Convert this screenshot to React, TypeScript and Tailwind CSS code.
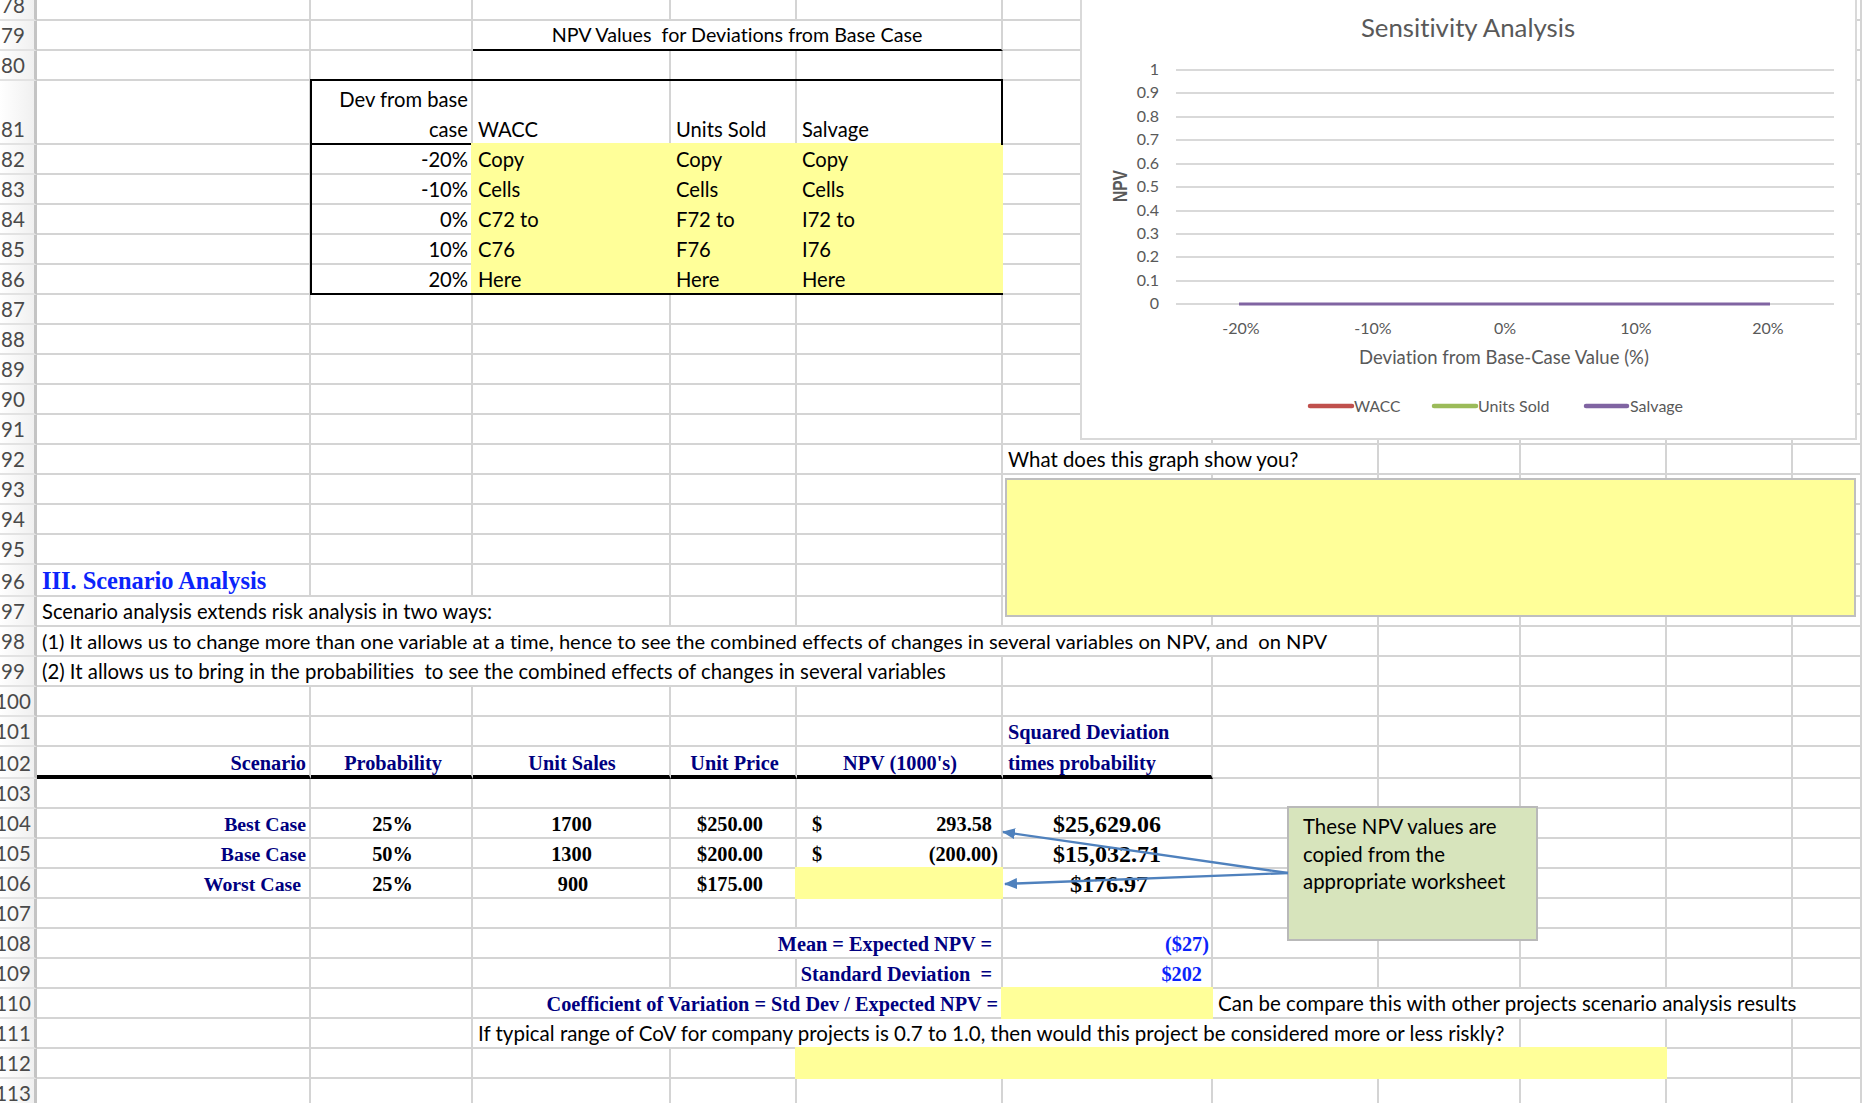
import React from "react";

const BASE = "font-['Lato','Carlito',sans-serif] [font-variant-ligatures:none] leading-[26px] pb-[1px] text-black";
const CAL = `${BASE} text-[20.2px]`;
const SERIF = "font-['Liberation_Serif',serif] font-bold";
const NAVY = `${SERIF} text-[20.3px] leading-[25px] text-[#000080]`;
const NAME = `${SERIF} text-[19.8px] leading-[25px] text-[#000080]`;
const HEAD = `${SERIF} text-[20.3px] leading-[24px] text-[#000080] border-b-[4px] border-b-black`;
const BLK = `${SERIF} text-[20.3px] leading-[25px] text-black`;
const BIG = `${SERIF} text-[24px] leading-[26px] text-black`;
const BLUE = `${SERIF} text-[20.3px] leading-[25px] text-[#0b24fb]`;

type C = { s?: number; t?: React.ReactNode; c?: string; y?: boolean };

const span: Record<number, string> = {
  1: "col-span-1", 2: "col-span-2", 3: "col-span-3", 4: "col-span-4", 5: "col-span-5", 6: "col-span-6", 7: "col-span-7",
};

const rows: { n: number; h: string; cells: C[] }[] = [
  { n: 78, h: "h-[30px]", cells: [] },
  { n: 79, h: "h-[30px]", cells: [{}, {}, { s: 3, t: "NPV Values  for Deviations from Base Case", c: `${BASE} text-[19.7px] justify-center border-b-black` }] },
  { n: 80, h: "h-[30px]", cells: [] },
  { n: 81, h: "h-[64px]", cells: [
    {},
    { t: <span className="-mb-[2px] block text-right leading-[30px]">Dev from base<br />case</span>, c: `${CAL} justify-end pr-[3px] border-b-black` },
    { t: "WACC", c: `${CAL} pl-[5px] border-b-black` },
    { t: "Units Sold", c: `${CAL} pl-[5px] border-b-black` },
    { t: "Salvage", c: `${CAL} pl-[5px] border-b-black border-r-black` },
  ] },
  ...[["-20%", "Copy", "Copy", "Copy"], ["-10%", "Cells", "Cells", "Cells"], ["0%", "C72 to", "F72 to", "I72 to"], ["10%", "C76", "F76", "I76"], ["20%", "Here", "Here", "Here"]].map((r, i) => ({
    n: 82 + i,
    h: "h-[30px]",
    cells: [
      {},
      { t: r[0], c: `${CAL} justify-end pr-[3px] ${i === 4 ? "border-b-black" : ""}` },
      { t: r[1], c: `${CAL} pl-[5px]`, y: true },
      { t: r[2], c: `${CAL} pl-[5px]`, y: true },
      { t: r[3], c: `${CAL} pl-[5px]`, y: true },
    ] as C[],
  })),
  ...[87, 88, 89, 90, 91].map((n) => ({ n, h: "h-[30px]", cells: [] as C[] })),
  { n: 92, h: "h-[30px]", cells: [{}, {}, {}, {}, {}, { s: 2, t: "What does this graph show you?", c: `${BASE} text-[20.4px] pl-[5px]` }] },
  { n: 93, h: "h-[30px]", cells: [] },
  { n: 94, h: "h-[30px]", cells: [] },
  { n: 95, h: "h-[30px]", cells: [] },
  { n: 96, h: "h-[32px]", cells: [{ t: "III. Scenario Analysis", c: `${SERIF} text-[24.4px] leading-[26px] pb-[1px] text-[#0b24fb] pl-[5px]` }] },
  { n: 97, h: "h-[30px]", cells: [{ s: 3, t: "Scenario analysis extends risk analysis in two ways:", c: `${CAL} pl-[5px]` }] },
  { n: 98, h: "h-[30px]", cells: [{ s: 7, t: "(1) It allows us to change more than one variable at a time, hence to see the combined effects of changes in several variables on NPV, and  on NPV", c: `${BASE} text-[20.15px] pl-[5px]` }] },
  { n: 99, h: "h-[30px]", cells: [{ s: 5, t: "(2) It allows us to bring in the probabilities  to see the combined effects of changes in several variables", c: `${BASE} text-[20.35px] pl-[5px]` }] },
  { n: 100, h: "h-[30px]", cells: [] },
  { n: 101, h: "h-[30px]", cells: [{}, {}, {}, {}, {}, { t: "Squared Deviation", c: `${NAVY} pl-[5px]` }] },
  { n: 102, h: "h-[32px]", cells: [
    { t: "Scenario", c: `${HEAD} justify-end pr-[3px]` },
    { t: "Probability", c: `${HEAD} justify-center pl-[4px]` },
    { t: "Unit Sales", c: `${HEAD} justify-center pl-[2px]` },
    { t: "Unit Price", c: `${HEAD} justify-center pl-[3px]` },
    { t: "NPV (1000's)", c: `${HEAD} justify-center pl-[2px]` },
    { t: "times probability", c: `${HEAD} pl-[5px]` },
  ] },
  { n: 103, h: "h-[30px]", cells: [] },
  { n: 104, h: "h-[30px]", cells: [
    { t: "Best Case", c: `${NAME} justify-end pr-[3px]` },
    { t: "25%", c: `${BLK} justify-center pl-[3px]` },
    { t: "1700", c: `${BLK} justify-center pl-[1px]` },
    { t: "$250.00", c: `${BLK} justify-center pr-[6px]` },
    { t: <span className="flex w-full justify-between"><span>$</span><span>293.58</span></span>, c: `${BLK} pl-[15px] pr-[9px]` },
    { t: "$25,629.06", c: `${BIG} justify-center` },
  ] },
  { n: 105, h: "h-[30px]", cells: [
    { t: "Base Case", c: `${NAME} justify-end pr-[3px]` },
    { t: "50%", c: `${BLK} justify-center pl-[3px]` },
    { t: "1300", c: `${BLK} justify-center pl-[1px]` },
    { t: "$200.00", c: `${BLK} justify-center pr-[6px]` },
    { t: <span className="flex w-full justify-between"><span>$</span><span>(200.00)</span></span>, c: `${BLK} pl-[15px] pr-[3px]` },
    { t: "$15,032.71", c: `${BIG} justify-center` },
  ] },
  { n: 106, h: "h-[30px]", cells: [
    { t: "Worst Case", c: `${NAME} justify-end pr-[8px]` },
    { t: "25%", c: `${BLK} justify-center pl-[3px]` },
    { t: "900", c: `${BLK} justify-center pl-[4px]` },
    { t: "$175.00", c: `${BLK} justify-center pr-[6px]` },
    { y: true },
    { t: "$176.97", c: `${BIG} justify-center pl-[4px]` },
  ] },
  { n: 107, h: "h-[30px]", cells: [] },
  { n: 108, h: "h-[30px]", cells: [{}, {}, {}, { s: 2, t: "Mean = Expected NPV =", c: `${NAVY} justify-end pr-[9px]` }, { t: "($27)", c: `${BLUE} justify-end pr-[2px]` }] },
  { n: 109, h: "h-[30px]", cells: [{}, {}, {}, {}, { t: "Standard Deviation  =", c: `${NAVY} justify-end pr-[9px]` }, { t: "$202", c: `${BLUE} justify-end pr-[9px]` }] },
  { n: 110, h: "h-[30px]", cells: [{}, {}, { s: 3, t: "Coefficient of Variation = Std Dev / Expected NPV =", c: `${NAVY} justify-end pr-[3px]` }, { y: true }, { s: 5, t: "Can be compare this with other projects scenario analysis results", c: `${BASE} text-[20.5px] pl-[5px] border-r-0` }] },
  { n: 111, h: "h-[30px]", cells: [{}, {}, { s: 6, t: "If typical range of CoV for company projects is 0.7 to 1.0, then would this project be considered more or less riskly?", c: `${BASE} text-[20.5px] pl-[5px]` }] },
  { n: 112, h: "h-[30px]", cells: [{}, {}, {}, {}, { s: 5, y: true }] },
  { n: 113, h: "h-[30px]", cells: [] },
];

function Cell({ cell }: { cell: C }) {
  const s = span[cell.s ?? 1];
  if (cell.y) {
    return (
      <div className={`${s} relative z-10 -mt-[2px] -ml-[2px] flex items-end whitespace-pre bg-[#ffff99] pb-[3px] ${cell.c ?? ""}`}>
        <span className="pl-[2px]">{cell.t}</span>
      </div>
    );
  }
  return (
    <div className={`${s} flex items-end whitespace-pre border-r-2 border-b-2 border-r-[#d4d4d4] border-b-[#d4d4d4] ${cell.c ?? ""}`}>
      {cell.t}
    </div>
  );
}

function Row({ n, h, cells }: { n: number; h: string; cells: C[] }) {
  const used = cells.reduce((a, c) => a + (c.s ?? 1), 0);
  const rest = Array.from({ length: 11 - used }, () => ({} as C));
  return (
    <div className={`col-span-12 grid grid-cols-subgrid ${h}`}>
      <div className="flex items-end justify-center overflow-hidden border-r-[3px] border-b-2 border-r-[#c4c4c4] border-b-[#e2e2e2] bg-gradient-to-r from-[#ffffff] to-[#f0f0f0] pr-[8px] pb-[1px] font-['Lato',sans-serif] text-[20.5px] leading-[26px] text-[#4a4a4a]">
        {n}
      </div>
      {cells.concat(rest).map((c, i) => (
        <Cell key={i} cell={c} />
      ))}
    </div>
  );
}

const yTicks = ["1", "0.9", "0.8", "0.7", "0.6", "0.5", "0.4", "0.3", "0.2", "0.1", "0"];
const yPos = [70, 93, 117, 140, 164, 187, 211, 234, 257, 281, 304];
const xTicks: [string, number][] = [["-20%", 1241], ["-10%", 1373], ["0%", 1505], ["10%", 1636], ["20%", 1768]];

function Chart() {
  return (
    <div className="absolute top-[-3px] left-[1080px] z-20 h-[443px] w-[777px] border-2 border-[#d9d9d9] bg-white [font-variant-ligatures:none]">
      <svg className="absolute top-[-2px] left-[-2px]" width="777" height="443" viewBox="1080 -3 777 443">
        <text x="1468" y="37" textAnchor="middle" fontFamily="Lato" fontSize="25.8" fill="#595959">Sensitivity Analysis</text>
        {yPos.map((y, i) => (
          <g key={y}>
            <line x1="1176" x2="1834" y1={y} y2={y} stroke="#d9d9d9" strokeWidth="2" />
            <text x="1159" y={y + 5} textAnchor="end" fontFamily="Lato" fontSize="16" fill="#595959">{yTicks[i]}</text>
          </g>
        ))}
        <text transform="translate(1127 186) rotate(-90)" textAnchor="middle" fontFamily="Liberation Sans" fontWeight="700" fontSize="20" fill="#595959" textLength="32" lengthAdjust="spacingAndGlyphs">NPV</text>
        <line x1="1239" x2="1770" y1="304" y2="304" stroke="#8064a2" strokeWidth="3" />
        {xTicks.map(([t, x]) => (
          <text key={t} x={x} y="334" textAnchor="middle" fontFamily="Lato" fontSize="16" fill="#595959">{t}</text>
        ))}
        <text x="1504" y="364" textAnchor="middle" fontFamily="Lato" fontSize="18.5" fill="#595959">Deviation from Base-Case Value (%)</text>
        <line x1="1310" x2="1352" y1="406" y2="406" stroke="#c0504d" strokeWidth="4.5" strokeLinecap="round" />
        <text x="1354" y="412" fontFamily="Lato" fontSize="15.6" fill="#595959">WACC</text>
        <line x1="1434" x2="1476" y1="406" y2="406" stroke="#9bbb59" strokeWidth="4.5" strokeLinecap="round" />
        <text x="1478" y="412" fontFamily="Lato" fontSize="16" fill="#595959">Units Sold</text>
        <line x1="1586" x2="1627" y1="406" y2="406" stroke="#8064a2" strokeWidth="4.5" strokeLinecap="round" />
        <text x="1630" y="412" fontFamily="Lato" fontSize="16" fill="#595959">Salvage</text>
      </svg>
    </div>
  );
}

export default function App() {
  return (
    <div className="relative h-[1103px] w-[1862px] overflow-hidden bg-white">
      <div className="-mt-[9px] grid grid-cols-[37px_274px_162px_198px_126px_206px_210px_166px_142px_146px_126px_69px]">
        {rows.map((r) => (
          <Row key={r.n} {...r} />
        ))}
      </div>

      {/* table outline: open on the right where the yellow cells run to the edge */}
      <div className="pointer-events-none absolute top-[79px] left-[310px] z-20 h-[216px] w-[693px] border-t-2 border-b-2 border-l-2 border-black" />
      <div className="pointer-events-none absolute top-[79px] left-[1001px] z-20 h-[66px] w-[2px] bg-black" />

      <Chart />

      {/* answer box */}
      <div className="absolute top-[478px] left-[1005px] z-20 h-[139px] w-[851px] border-2 border-[#bfbfbf] bg-[#ffff99]" />

      {/* callout */}
      <div className="absolute top-[806px] left-[1287px] z-20 h-[135px] w-[251px] border-2 border-[#b9b9b9] bg-[#d7e4bc] pt-[5px] pl-[14px] font-['Lato',sans-serif] text-[20.4px] leading-[27.5px] text-black [font-variant-ligatures:none]">
        These NPV values are
        <br />
        copied from the
        <br />
        appropriate worksheet
      </div>

      {/* arrows */}
      <svg className="absolute top-[820px] left-[995px] z-30" width="300" height="75" viewBox="995 820 300 75">
        <defs>
          <marker id="ah" markerWidth="13" markerHeight="11" refX="12" refY="5.5" orient="auto" markerUnits="userSpaceOnUse">
            <path d="M0 0 L13 5.5 L0 11 Z" fill="#4f81bd" />
          </marker>
        </defs>
        <line x1="1288" y1="873" x2="1003" y2="832" stroke="#4f81bd" strokeWidth="2.4" markerEnd="url(#ah)" />
        <line x1="1288" y1="873" x2="1005" y2="884" stroke="#4f81bd" strokeWidth="2.4" markerEnd="url(#ah)" />
      </svg>
    </div>
  );
}
